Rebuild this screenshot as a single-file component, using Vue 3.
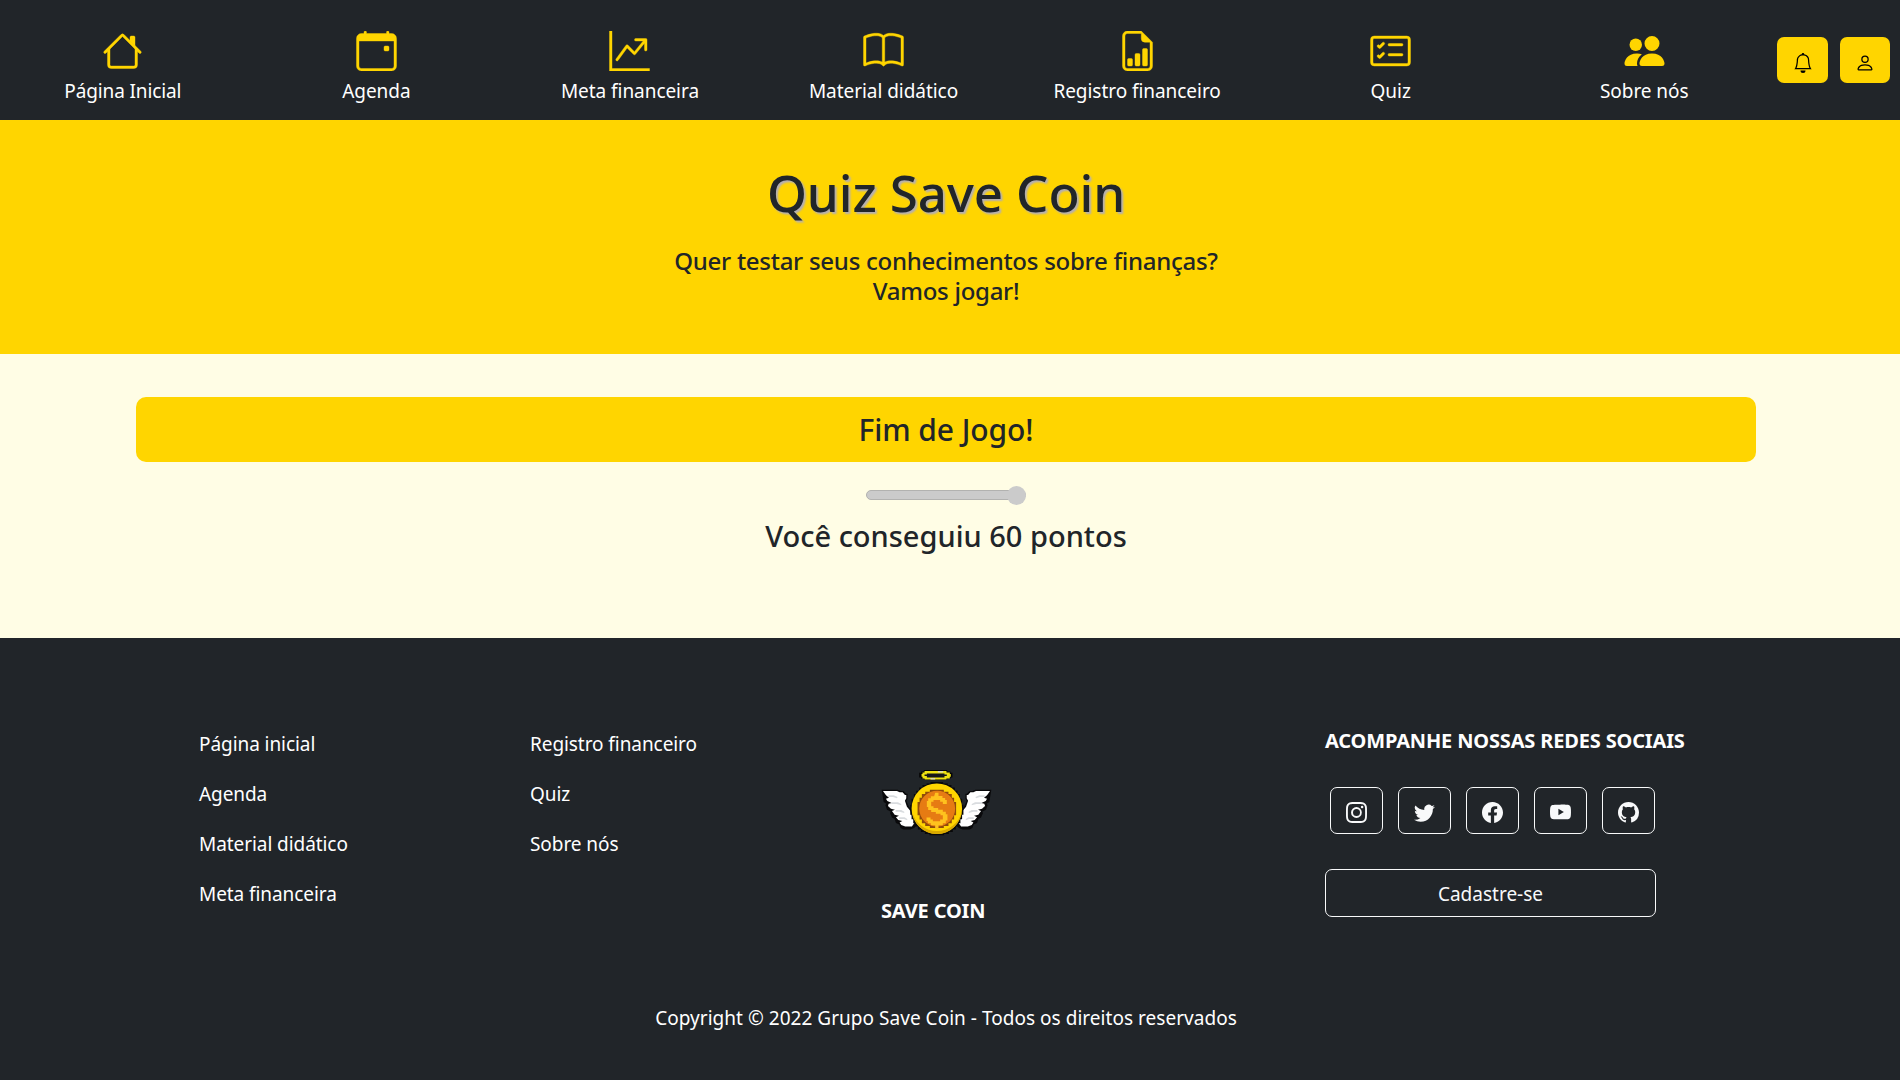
<script setup>
const navItems = [
  {
    label: 'Página Inicial',
    paths: [
      { d: 'M2 13.5V7h1v6.5a.5.5 0 0 0 .5.5h9a.5.5 0 0 0 .5-.5V7h1v6.5a1.5 1.5 0 0 1-1.5 1.5h-9A1.5 1.5 0 0 1 2 13.5zm11-11V6l-2-2V2.500a.5.5 0 0 1 .5-.5h1a.5.5 0 0 1 .5.5z' },
      { d: 'M7.293 1.500a1 1 0 0 1 1.414 0l6.647 6.646a.5.5 0 0 1-.708.708L8 2.207 1.354 8.854a.5.5 0 1 1-.708-.708L7.293 1.500z' }
    ]
  },
  {
    label: 'Agenda',
    paths: [
      { d: 'M11 6.500a.5.5 0 0 1 .5-.5h1a.5.5 0 0 1 .5.5v1a.5.5 0 0 1-.5.5h-1a.5.5 0 0 1-.5-.5v-1z' },
      { d: 'M3.5 0a.5.5 0 0 1 .5.5V1h8V.5a.5.5 0 0 1 1 0V1h1a2 2 0 0 1 2 2v11a2 2 0 0 1-2 2H2a2 2 0 0 1-2-2V3a2 2 0 0 1 2-2h1V.5a.5.5 0 0 1 .5-.5zM1 4v10a1 1 0 0 0 1 1h12a1 1 0 0 0 1-1V4H1z' }
    ]
  },
  {
    label: 'Meta financeira',
    paths: [
      { d: 'M0 0h1v15h15v1H0V0zm10 3.500a.5.5 0 0 1 .5-.5h4a.5.5 0 0 1 .5.5v4a.5.5 0 0 1-1 0V4.900l-3.613 4.417a.5.5 0 0 1-.74.037L7.060 6.767l-3.656 5.027a.5.5 0 0 1-.808-.588l4-5.500a.5.5 0 0 1 .758-.06l2.609 2.610L13.445 4H10.500a.5.5 0 0 1-.5-.5z' }
    ]
  },
  {
    label: 'Material didático',
    paths: [
      { d: 'M1 2.828c.885-.37 2.154-.769 3.388-.893 1.330-.134 2.458.063 3.112.752v9.746c-.935-.53-2.120-.603-3.213-.493-1.180.12-2.370.461-3.287.811V2.828zm7.500-.141c.654-.689 1.782-.886 3.112-.752 1.234.124 2.503.523 3.388.893v9.923c-.918-.35-2.107-.692-3.287-.81-1.094-.111-2.278-.039-3.213.492V2.687zM8 1.783C7.015.936 5.587.810 4.287.940c-1.514.153-3.042.672-3.994 1.105A.5.5 0 0 0 0 2.500v11a.5.5 0 0 0 .707.455c.882-.4 2.303-.881 3.680-1.020 1.409-.142 2.590.087 3.223.877a.5.5 0 0 0 .78 0c.633-.79 1.814-1.019 3.222-.877 1.378.139 2.800.620 3.681 1.020A.5.5 0 0 0 16 13.500v-11a.5.5 0 0 0-.293-.455c-.952-.433-2.480-.952-3.994-1.105C10.413.809 8.985.936 8 1.783z' }
    ]
  },
  {
    label: 'Registro financeiro',
    paths: [
      { d: 'M10 13.500a.5.5 0 0 0 .5.5h1a.5.5 0 0 0 .5-.5v-6a.5.5 0 0 0-.5-.5h-1a.5.5 0 0 0-.5.5v6zm-2.500.5a.5.5 0 0 1-.5-.5v-4a.5.5 0 0 1 .5-.5h1a.5.5 0 0 1 .5.5v4a.5.5 0 0 1-.5.5h-1zm-3 0a.5.5 0 0 1-.5-.5v-2a.5.5 0 0 1 .5-.5h1a.5.5 0 0 1 .5.5v2a.5.5 0 0 1-.5.5h-1z' },
      { d: 'M14 14V4.500L9.500 0H4a2 2 0 0 0-2 2v12a2 2 0 0 0 2 2h8a2 2 0 0 0 2-2zM9.500 3A1.500 1.500 0 0 0 11 4.500h2V14a1 1 0 0 1-1 1H4a1 1 0 0 1-1-1V2a1 1 0 0 1 1-1h5.500v2z' }
    ]
  },
  {
    label: 'Quiz',
    paths: [
      { d: 'M14.500 3a.5.5 0 0 1 .5.5v9a.5.5 0 0 1-.5.5h-13a.5.5 0 0 1-.5-.5v-9a.5.5 0 0 1 .5-.5h13zm-13-1A1.500 1.500 0 0 0 0 3.500v9A1.500 1.500 0 0 0 1.500 14h13a1.500 1.500 0 0 0 1.500-1.500v-9A1.500 1.500 0 0 0 14.500 2h-13z' },
      { d: 'M7 5.500a.5.5 0 0 1 .5-.5h5a.5.5 0 0 1 0 1h-5a.5.5 0 0 1-.5-.5zm-1.496-.854a.5.5 0 0 1 0 .708l-1.500 1.500a.5.5 0 0 1-.708 0l-.5-.5a.5.5 0 1 1 .708-.708l.146.147 1.146-1.147a.5.5 0 0 1 .708 0zM7 9.500a.5.5 0 0 1 .5-.5h5a.5.5 0 0 1 0 1h-5a.5.5 0 0 1-.5-.5zm-1.496-.854a.5.5 0 0 1 0 .708l-1.500 1.500a.5.5 0 0 1-.708 0l-.5-.5a.5.5 0 0 1 .708-.708l.146.147 1.146-1.147a.5.5 0 0 1 .708 0z' }
    ]
  },
  {
    label: 'Sobre nós',
    solid: true,
    paths: [
      { d: 'M7 14s-1 0-1-1 1-4 5-4 5 3 5 4-1 1-1 1H7zm4-6a3 3 0 1 0 0-6 3 3 0 0 0 0 6z' },
      { d: 'M5.216 14A2.238 2.238 0 0 1 5 13c0-1.355.68-2.750 1.936-3.720A6.325 6.325 0 0 0 5 9c-4 0-5 3-5 4s1 1 1 1h4.216z' },
      { d: 'M4.500 8a2.500 2.500 0 1 0 0-5 2.500 2.500 0 0 0 0 5z' }
    ]
  }
]

const actions = [
  { name: 'Notificações', d: 'M8 16a2 2 0 0 0 2-2H6a2 2 0 0 0 2 2zM8 1.918l-.797.161A4.002 4.002 0 0 0 4 6c0 .628-.134 2.197-.459 3.742-.16.767-.376 1.566-.663 2.258h10.244c-.287-.692-.502-1.490-.663-2.258C12.134 8.197 12 6.628 12 6a4.002 4.002 0 0 0-3.203-3.920L8 1.917zM14.220 12c.223.447.481.801.78 1H1c.299-.199.557-.553.78-1C2.680 10.200 3 6.880 3 6c0-2.420 1.720-4.440 4.005-4.901a1 1 0 1 1 1.990 0A5.002 5.002 0 0 1 13 6c0 .88.32 4.200 1.220 6z' },
  { name: 'Perfil', d: 'M8 8a3 3 0 1 0 0-6 3 3 0 0 0 0 6zm2-3a2 2 0 1 1-4 0 2 2 0 0 1 4 0zm4 8c0 1-1 1-1 1H3s-1 0-1-1 1-4 6-4 6 3 6 4zm-1-.004c-.001-.246-.154-.986-.832-1.664C11.516 10.680 10.289 10 8 10c-2.290 0-3.516.680-4.168 1.332-.678.678-.830 1.418-.832 1.664h10z' }
]

const footerColumns = [
  ['Página inicial', 'Agenda', 'Material didático', 'Meta financeira'],
  ['Registro financeiro', 'Quiz', 'Sobre nós']
]

const socials = [
  { name: 'Instagram', d: 'M8 0C5.829 0 5.556.010 4.703.048 3.850.088 3.269.222 2.760.420a3.917 3.917 0 0 0-1.417.923A3.927 3.927 0 0 0 .420 2.760C.222 3.268.087 3.850.048 4.700.010 5.555 0 5.827 0 8.001c0 2.172.010 2.444.048 3.297.040.852.174 1.433.372 1.942.205.526.478.972.923 1.417.444.445.890.719 1.416.923.510.198 1.090.333 1.942.372C5.555 15.990 5.827 16 8 16s2.444-.010 3.298-.048c.851-.040 1.434-.174 1.943-.372a3.916 3.916 0 0 0 1.416-.923c.445-.445.718-.891.923-1.417.197-.509.332-1.090.372-1.942C15.990 10.445 16 10.173 16 8s-.010-2.445-.048-3.299c-.040-.851-.175-1.433-.372-1.941a3.926 3.926 0 0 0-.923-1.417A3.911 3.911 0 0 0 13.240.420c-.510-.198-1.092-.333-1.943-.372C10.443.010 10.172 0 7.998 0h.003zm-.717 1.442h.718c2.136 0 2.389.007 3.232.046.780.035 1.204.166 1.486.275.373.145.640.319.920.599.280.280.453.546.598.920.110.281.240.705.275 1.485.039.843.047 1.096.047 3.231s-.008 2.389-.047 3.232c-.035.780-.166 1.203-.275 1.485a2.470 2.470 0 0 1-.599.919c-.280.280-.546.453-.920.598-.280.110-.704.240-1.485.276-.843.038-1.096.047-3.232.047s-2.390-.009-3.233-.047c-.780-.036-1.203-.166-1.485-.276a2.478 2.478 0 0 1-.920-.598 2.480 2.480 0 0 1-.600-.920c-.109-.281-.240-.705-.275-1.485-.038-.843-.046-1.096-.046-3.233 0-2.136.008-2.388.046-3.231.036-.780.166-1.204.276-1.486.145-.373.319-.640.599-.920.280-.280.546-.453.920-.598.282-.110.705-.240 1.485-.276.738-.034 1.024-.044 2.515-.045v.002zm4.988 1.328a.960.960 0 1 0 0 1.920.960.960 0 0 0 0-1.920zm-4.270 1.122a4.109 4.109 0 1 0 0 8.217 4.109 4.109 0 0 0 0-8.217zm0 1.441a2.667 2.667 0 1 1 0 5.334 2.667 2.667 0 0 1 0-5.334z' },
  { name: 'Twitter', d: 'M5.026 15c6.038 0 9.341-5.003 9.341-9.334 0-.140 0-.282-.006-.422A6.685 6.685 0 0 0 16 3.542a6.658 6.658 0 0 1-1.889.518 3.301 3.301 0 0 0 1.447-1.817 6.533 6.533 0 0 1-2.087.793A3.286 3.286 0 0 0 7.875 6.030a9.325 9.325 0 0 1-6.767-3.429 3.289 3.289 0 0 0 1.018 4.382A3.323 3.323 0 0 1 .640 6.575v.045a3.288 3.288 0 0 0 2.632 3.218 3.203 3.203 0 0 1-.865.115 3.230 3.230 0 0 1-.614-.057 3.283 3.283 0 0 0 3.067 2.277A6.588 6.588 0 0 1 .780 13.580a6.320 6.320 0 0 1-.780-.045A9.344 9.344 0 0 0 5.026 15z' },
  { name: 'Facebook', d: 'M16 8.049c0-4.446-3.582-8.050-8-8.050C3.580 0-.002 3.603-.002 8.050c0 4.017 2.926 7.347 6.750 7.951v-5.625h-2.030V8.050H6.750V6.275c0-2.017 1.195-3.131 3.022-3.131.876 0 1.791.157 1.791.157v1.980h-1.009c-.993 0-1.303.621-1.303 1.258v1.510h2.218l-.354 2.326H9.250V16c3.824-.604 6.750-3.934 6.750-7.951z' },
  { name: 'YouTube', d: 'M8.051 1.999h.089c.822.003 4.987.033 6.110.335a2.010 2.010 0 0 1 1.415 1.420c.101.380.172.883.220 1.402l.010.104.022.260.008.104c.065.914.073 1.770.074 1.957v.075c-.001.194-.010 1.108-.082 2.060l-.008.105-.009.104c-.050.572-.124 1.140-.235 1.558a2.007 2.007 0 0 1-1.415 1.420c-1.160.312-5.569.334-6.180.335h-.142c-.309 0-1.587-.006-2.927-.052l-.170-.006-.087-.004-.171-.007-.171-.007c-1.110-.049-2.167-.128-2.654-.260a2.007 2.007 0 0 1-1.415-1.419c-.111-.417-.185-.986-.235-1.558L.090 9.820l-.008-.104A31.400 31.400 0 0 1 0 7.680v-.123c.002-.215.010-.958.064-1.778l.007-.103.003-.052.008-.104.022-.260.010-.104c.048-.519.119-1.023.220-1.402a2.007 2.007 0 0 1 1.415-1.420c.487-.130 1.544-.210 2.654-.260l.170-.007.172-.006.086-.003.171-.007A99.788 99.788 0 0 1 7.858 2h.193zM6.400 5.209v4.818l4.157-2.408L6.400 5.209z' },
  { name: 'GitHub', d: 'M8 0C3.580 0 0 3.580 0 8c0 3.540 2.290 6.530 5.470 7.590.4.070.55-.170.55-.380 0-.190-.010-.820-.010-1.490-2.010.370-2.530-.490-2.690-.940-.090-.230-.480-.940-.820-1.130-.280-.150-.680-.520-.010-.530.630-.010 1.080.580 1.230.820.720 1.210 1.870.870 2.330.660.070-.520.280-.870.510-1.070-1.780-.200-3.640-.890-3.640-3.950 0-.870.310-1.590.820-2.150-.080-.200-.360-1.020.080-2.120 0 0 .670-.210 2.200.820.640-.180 1.320-.270 2-.270.680 0 1.360.090 2 .270 1.530-1.040 2.200-.820 2.200-.820.440 1.100.160 1.920.080 2.120.510.560.820 1.270.820 2.150 0 3.070-1.870 3.750-3.650 3.950.290.250.540.730.540 1.480 0 1.070-.010 1.930-.010 2.200 0 .210.150.460.550.380A8.012 8.012 0 0 0 16 8c0-4.420-3.580-8-8-8z' }
]
</script>

<template>
  <div class="page">
    <header class="topbar">
      <nav class="menu">
        <a v-for="item in navItems" :key="item.label" class="menu-item">
          <svg class="menu-icon" :class="{ solid: item.solid }" viewBox="0 0 16 16" fill="currentColor">
            <path v-for="(p, i) in item.paths" :key="i" :d="p.d" fill-rule="evenodd" />
          </svg>
          <span>{{ item.label }}</span>
        </a>
      </nav>
      <div class="actions">
        <button v-for="a in actions" :key="a.name" class="action" :aria-label="a.name">
          <svg viewBox="0 0 16 16" fill="currentColor"><path :d="a.d" /></svg>
        </button>
      </div>
    </header>

    <section class="hero">
      <h1>Quiz Save Coin</h1>
      <h5>Quer testar seus conhecimentos sobre finanças?<br />Vamos jogar!</h5>
    </section>

    <main class="quiz">
      <h3 class="result">Fim de Jogo!</h3>
      <div class="slider"><span class="thumb"></span></div>
      <h3 class="score">Você conseguiu 60 pontos</h3>
    </main>

    <footer class="footer">
      <div class="footer-grid">
        <ul v-for="(col, i) in footerColumns" :key="i" class="links">
          <li v-for="link in col" :key="link">{{ link }}</li>
        </ul>
        <div class="brand">
          <svg class="logo" viewBox="0 0 340 204">
            <!-- halo -->
            <path d="M132 6h70v4h10v4h6v14h-6v4h-10v4h-70v-4h-8v-4h-6V14h6v-4h8z" fill="#050505" />
            <path d="M134 9h66v4h10v5h3v8h-3v5h-10v3h-66v-3h-6v-5h-3v-8h3v-5h6z" fill="#efe212" />
            <path d="M141 16h53v3h7v5h-7v4h-53v-4h-7v-5h7z" fill="#15161a" />
            <path d="M174 9h16v4h-16zM152 30h14v4h-14z" fill="#d9d8bd" />
            <!-- wings -->
            <g id="wing">
              <path d="M5 65h48l9 4h9l8 8h4v16l-4 5 8 18 8 10 5 16 10 10v20l-7 8-12 5H70l-8-5-4-10-10-5-4-12-8-4-6-14 3-4-12-6-5-14 3-4-8-5z" fill="#09090b" />
              <path d="M9 69h42l8 4h9l7 8h4v10l-4 7 6 18 10 12 5 16 7 9v13l-7 10H76l-12-5-5-7 8-5-12-3-7-8 9-5-13-3-8-11 9-4-12-3-9-8 2-7 9-2-13-6-4-7 9-3-9-7z" fill="#fff" />
              <path d="M25 82h16l12 5-2 4-12-4H25zM34 103h20l10 5v4l-14-4H34zM47 126h17l9 5v4l-14-4H47zM58 148h16l8 5v4l-10-4H58z" fill="#d9dcdf" />
            </g>
            <use href="#wing" transform="translate(340 0) scale(-1 1)" />
            <!-- coin -->
            <path d="M152 42h38v4h14v5h11v7h10v10h8v10h7v14h7v18h4v30h-4v14h-5v12h-6v10h-8v9h-9v7h-12v6h-14v4h-44v-4h-14v-6h-12v-7h-9v-9h-8v-10h-6v-12h-5v-14h-4v-30h4V92h7V78h7V68h9V58h10v-7h12v-5h12z" fill="#08080a" />
            <circle cx="171" cy="122" r="76" fill="#ffd500" />
            <path d="M97 132a75 75 0 0 0 149 0 77 77 0 0 1-149 0z" fill="#d9a900" />
            <path d="M150 65h42v6h14v7h10v11h7v13h6v40h-6v13h-7v11h-10v8h-14v6h-42v-6h-14v-8h-10v-11h-7v-13h-6v-40h6V89h7V78h10v-7h14z" fill="#8f4a0b" />
            <circle cx="172" cy="122" r="54" fill="#e67b13" />
            <path d="M166 74h10v10h12v6h8v6h5v12h-12v-7h-8v-5h-20v5h-7v14h7v5h14v5h14v6h9v8h5v19h-5v8h-9v6h-13v12h-10v-12h-13v-6h-9v-7h-4v-10h12v6h7v5h22v-5h8v-13h-7v-5h-14v-5h-14v-6h-9v-9h-4V99h4v-8h8v-6h10z" fill="#ffc21e" />
          </svg>
          <strong>SAVE COIN</strong>
        </div>
        <div class="contact">
          <strong>ACOMPANHE NOSSAS REDES SOCIAIS</strong>
          <div class="socials">
            <a v-for="s in socials" :key="s.name" class="social" :aria-label="s.name">
              <svg viewBox="0 0 16 16" fill="currentColor"><path :d="s.d" /></svg>
            </a>
          </div>
          <button class="signup">Cadastre-se</button>
        </div>
      </div>
      <p class="copyright">Copyright © 2022 Grupo Save Coin - Todos os direitos reservados</p>
    </footer>
  </div>
</template>

<style>
body {
  background: #212529;
}
</style>

<style scoped>
.page {
  display: flex;
  flex-direction: column;
  height: 1080px;
  overflow: hidden;
  font-family: "Segoe UI", "Noto Sans", sans-serif;
  font-size: 19px;
  line-height: 30px;
  color: #212529;
}
.page * {
  box-sizing: border-box;
}
h1,
h3,
h5,
p,
ul {
  margin: 0;
  padding: 0;
  font-weight: 500;
}
button {
  font: inherit;
  padding: 0;
}
.topbar {
  display: flex;
  height: 120px;
  flex: none;
  background: #212529;
}
.menu {
  display: flex;
  flex: none;
  width: 1775px;
  margin-left: -4px;
  padding-top: 31px;
}
.menu-item {
  display: flex;
  flex: 1 1 0;
  flex-direction: column;
  align-items: center;
  gap: 5px;
  letter-spacing: -0.050px;
  color: #fff;
}
.menu-item:first-child span {
  letter-spacing: -0.130px;
}
.menu-icon {
  width: 41px;
  height: 40px;
  color: #ffd500;
  stroke: currentColor;
  stroke-width: 0.160;
}
.menu-icon.solid {
  stroke: none;
}
.actions {
  display: flex;
  gap: 12px;
  margin-left: 6px;
  padding-top: 37px;
}
.action {
  display: flex;
  align-items: center;
  justify-content: center;
  width: 51px;
  height: 46px;
  padding: 6px 0 0 0;
  border: 0;
  border-radius: 7px;
  background: #ffd500;
  color: #000;
}
.action:last-child {
  width: 50px;
}
.action svg {
  width: 20px;
  height: 20px;
}
.hero {
  height: 234px;
  flex: none;
  padding: 42px 8px 0 0;
  background: #ffd500;
  text-align: center;
}
.hero h1 {
  font-size: 51px;
  letter-spacing: -0.080px;
  line-height: 60px;
  text-shadow: 2px 2px 2px #b3aeb6;
}
.hero h5 {
  margin-top: 24px;
  font-size: 24px;
  letter-spacing: -0.270px;
  line-height: 30px;
}
.quiz {
  display: flex;
  flex: none;
  flex-direction: column;
  align-items: center;
  height: 284px;
  padding: 43px 8px 0 0;
  background: #fffde5;
}
.result {
  width: 1620px;
  height: 65px;
  border-radius: 10px;
  background: #ffd500;
  font-size: 30px;
  letter-spacing: -0.080px;
  line-height: 66px;
  text-align: center;
}
.slider {
  display: flex;
  align-items: center;
  justify-content: flex-end;
  width: 160px;
  height: 10px;
  margin-top: 28px;
  border: 1px solid #b2b2b0;
  border-radius: 5px;
  background: #cbcbcb;
}
.thumb {
  flex: none;
  width: 19px;
  height: 19px;
  margin-right: -1px;
  border-radius: 50%;
  background: #cbcbcb;
}
.score {
  margin-top: 18px;
  font-size: 29px;
  line-height: 36px;
}
.footer {
  flex: 1;
  background: #212529;
  color: #fff;
}
.footer-grid {
  display: grid;
  grid-template-columns: 331px 351px 444px 1fr;
  height: 365px;
  padding: 0 0 0 199px;
}
.links {
  display: flex;
  flex-direction: column;
  gap: 20px;
  padding-top: 91px;
  list-style: none;
}
.links li {
  letter-spacing: -0.070px;
  font-weight: 400;
}
.brand {
  display: flex;
  flex-direction: column;
  align-items: flex-start;
  padding-top: 130px;
}
.logo {
  width: 113px;
  height: 68px;
  margin-left: -1px;
}
.brand strong {
  margin-top: 60px;
  font-size: 20px;
  letter-spacing: -0.160px;
}
.contact {
  display: flex;
  flex-direction: column;
  align-items: flex-start;
  padding-top: 88px;
}
.contact strong {
  font-size: 20px;
  letter-spacing: -0.160px;
}
.socials {
  display: flex;
  gap: 15px;
  margin: 31px 0 35px 5px;
}
.social {
  display: flex;
  align-items: center;
  justify-content: center;
  width: 53px;
  height: 47px;
  padding-top: 4px;
  border: 1px solid #f8f9fa;
  border-radius: 7px;
  color: #f8f9fa;
}
.social svg {
  width: 21px;
  height: 21px;
}
.signup {
  width: 331px;
  height: 48px;
  padding-top: 2px;
  border: 1px solid #f8f9fa;
  border-radius: 7px;
  background: transparent;
  color: #f8f9fa;
}
.copyright {
  padding-right: 8px;
  letter-spacing: 0.030px;
  font-weight: 400;
  text-align: center;
}
</style>
